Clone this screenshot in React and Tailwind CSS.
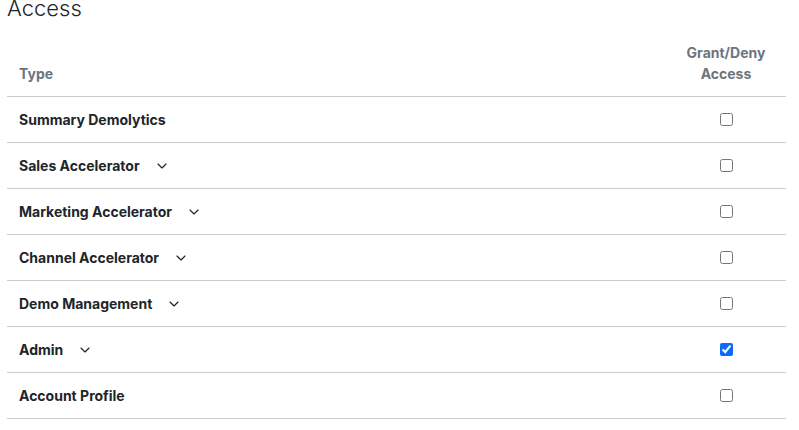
import React, { useState } from 'react';
import { ChevronDown } from 'lucide-react';

const rows = [
  { name: 'Summary Demolytics', expandable: false, checked: false },
  { name: 'Sales Accelerator', expandable: true, checked: false },
  { name: 'Marketing Accelerator', expandable: true, checked: false },
  { name: 'Channel Accelerator', expandable: true, checked: false },
  { name: 'Demo Management', expandable: true, checked: false },
  { name: 'Admin', expandable: true, checked: true },
  { name: 'Account Profile', expandable: false, checked: false },
];

const App = () => {
  const [access, setAccess] = useState(rows.map(r => r.checked));

  return (
    <div className="bg-white min-h-screen px-[7px] text-[#212529]" style={{ fontFamily: 'Inter, "Noto Sans", sans-serif' }}>
      <h2 className="text-[22px] font-light leading-none -mt-[3px] text-[#212529]">Access</h2>

      <table className="w-[779px] mt-[23px] border-collapse">
        <thead>
          <tr className="border-b border-[#c9ced4]">
            <th className="text-left align-bottom px-3 pb-[12px] text-[14px] font-bold text-[#6c757d] leading-[21px]">Type</th>
            <th className="w-[120px] text-center align-bottom px-3 pb-[12px] text-[14px] font-bold text-[#6c757d] leading-[21px]">
              Grant/Deny
              <br />
              Access
            </th>
          </tr>
        </thead>
        <tbody>
          {rows.map((row, i) => (
            <tr key={row.name} className="border-b border-[#c9ced4] h-[46px]">
              <td className="px-3 py-0 align-middle">
                <div className="flex items-center gap-[14px] text-[14px] font-bold leading-[21px]">
                  <span>{row.name}</span>
                  {row.expandable && <ChevronDown className="h-[16px] w-[16px] text-[#222]" strokeWidth={1.75} />}
                </div>
              </td>
              <td className="px-3 py-0 align-middle text-center">
                <input
                  type="checkbox"
                  checked={access[i]}
                  onChange={() => setAccess(a => a.map((v, j) => (j === i ? !v : v)))}
                  className="w-[13px] h-[13px] align-middle mb-[3px] accent-[#0a6cff]"
                />
              </td>
            </tr>
          ))}
        </tbody>
      </table>
    </div>
  );
};

export default App;
